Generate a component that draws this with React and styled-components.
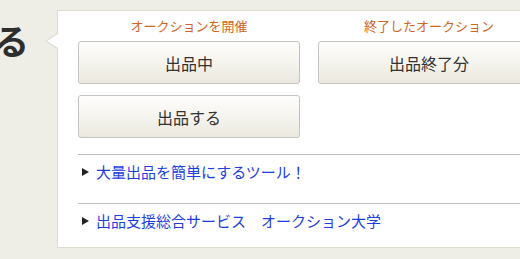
import React from "react";
import styled, { createGlobalStyle } from "styled-components";

const Global = createGlobalStyle`
  html, body { margin: 0; padding: 0; }
  body {
    background: #efeee6;
    overflow: hidden;
    font-family: "Noto Sans CJK JP", "Noto Sans", sans-serif;
  }
`;

const Page = styled.div`
  display: flex;
  align-items: flex-start;
  padding-top: 10px;
  width: 600px;
`;

const HeadingCol = styled.div`
  width: 57px;
  flex: none;
  display: flex;
  justify-content: flex-end;
  overflow: hidden;
  padding-right: 28px;
  box-sizing: border-box;
  margin-top: 9px;
`;

const Heading = styled.h1`
  margin: 0;
  font-size: 35px;
  line-height: 42px;
  font-weight: 700;
  color: #2e2e2e;
  white-space: nowrap;
`;

const Panel = styled.div`
  position: relative;
  flex: none;
  width: 540px;
  background: #fff;
  border: 1px solid #dfddd2;
  border-right: none;
  padding: 0 0 14px 20px;

  &::before,
  &::after {
    content: "";
    position: absolute;
    top: 22px;
    border-style: solid;
    border-color: transparent;
  }
  &::before {
    left: -13px;
    border-width: 8px 12px 8px 0;
    border-right-color: #dfddd2;
  }
  &::after {
    left: -11px;
    top: 23px;
    border-width: 7px 11px 7px 0;
    border-right-color: #fff;
  }
`;

const Grid = styled.div`
  display: grid;
  grid-template-columns: 222px 222px;
  column-gap: 18px;
  row-gap: 11px;
`;

const Label = styled.div`
  height: 30px;
  padding-top: 6px;
  box-sizing: border-box;
  text-align: center;
  font-size: 13px;
  line-height: 17px;
  color: #cf6424;
  margin-bottom: -11px;
`;

const Button = styled.button`
  height: 43px;
  border: 1px solid #c3c3c0;
  border-radius: 3px;
  background: linear-gradient(#fefefc, #ebe9df);
  font-family: inherit;
  font-size: 16px;
  color: #333;
  padding: 0;
  cursor: pointer;
`;

const Rule = styled.hr`
  margin: 16px 0 0;
  border: none;
  border-top: 1px solid #bdbdbd;
  height: 0;
`;

const LinkRow = styled.div`
  display: flex;
  align-items: center;
  padding: 6px 0 ${(p) => (p.$last ? 1 : 20)}px;
  line-height: 22px;
  & + hr { margin-top: 0; }
`;

const Tri = styled.span`
  display: inline-block;
  width: 0;
  height: 0;
  border-left: 7px solid #222;
  border-top: 4.5px solid transparent;
  border-bottom: 4.5px solid transparent;
  margin: 0 7px 0 4px;
`;

const Link = styled.a`
  color: #1e3ee0;
  font-size: 15px;
  text-decoration: none;
`;

export default function App() {
  return (
    <>
      <Global />
      <Page>
        <HeadingCol>
          <Heading>出品する</Heading>
        </HeadingCol>
        <Panel>
          <Grid>
            <Label>オークションを開催</Label>
            <Label>終了したオークション</Label>
            <Button>出品中</Button>
            <Button>出品終了分</Button>
            <Button>出品する</Button>
          </Grid>
          <Rule />
          <LinkRow>
            <Tri />
            <Link href="#">大量出品を簡単にするツール！</Link>
          </LinkRow>
          <Rule />
          <LinkRow $last>
            <Tri />
            <Link href="#">出品支援総合サービス　オークション大学</Link>
          </LinkRow>
        </Panel>
      </Page>
    </>
  );
}
